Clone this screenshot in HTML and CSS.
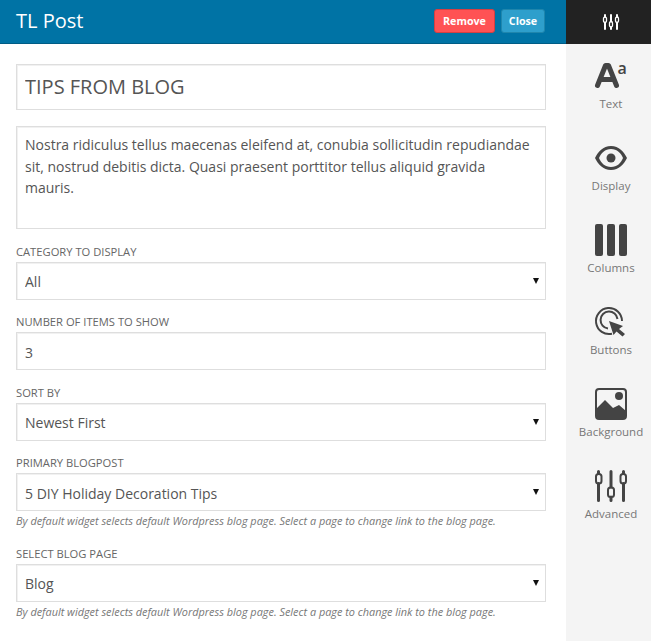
FILE: index.html
```html
<!DOCTYPE html>
<html lang="en">
<head>
    <meta charset="UTF-8">
    <meta name="viewport" content="width=device-width, initial-scale=1.0">
    <title>TL Post</title>
    <link rel="stylesheet" href="styles.css">
</head>
<body>

<div class="panel">
    <div class="main">
        <div class="header">
            <h1>TL Post</h1>
            <div class="header-buttons">
                <button class="btn btn-remove" type="button">Remove</button>
                <button class="btn btn-close" type="button">Close</button>
            </div>
        </div>

        <form class="settings">
            <input class="field field-title" type="text" value="TIPS FROM BLOG">
            <textarea class="field field-text" rows="4">Nostra ridiculus tellus maecenas eleifend at, conubia sollicitudin repudiandae sit, nostrud debitis dicta. Quasi praesent porttitor tellus aliquid gravida mauris.</textarea>

            <div class="group">
                <label for="category">Category to display</label>
                <div class="select-wrap">
                    <select class="field" id="category"><option>All</option></select>
                </div>
            </div>

            <div class="group">
                <label for="items">Number of items to show</label>
                <input class="field" type="text" id="items" value="3">
            </div>

            <div class="group">
                <label for="sort">Sort by</label>
                <div class="select-wrap">
                    <select class="field" id="sort"><option>Newest First</option></select>
                </div>
            </div>

            <div class="group">
                <label for="primary">Primary blogpost</label>
                <div class="select-wrap">
                    <select class="field" id="primary"><option>5 DIY Holiday Decoration Tips</option></select>
                </div>
                <p class="help">By default widget selects default Wordpress blog page. Select a page to change link to the blog page.</p>
            </div>

            <div class="group">
                <label for="blog-page">Select blog page</label>
                <div class="select-wrap">
                    <select class="field" id="blog-page"><option>Blog</option></select>
                </div>
                <p class="help">By default widget selects default Wordpress blog page. Select a page to change link to the blog page.</p>
            </div>
        </form>
    </div>

    <div class="sidebar">
        <a class="tab tab-top" href="#" aria-label="Settings">
            <svg width="18" height="16" viewBox="0 0 18 16">
                <g fill="none" stroke="#fff">
                    <path stroke-width="2" stroke-linecap="round" d="M3 1V3M3 8.500V15M9 1V7.500M9 13V15M15 1V3M15 8.500V15"/>
                    <rect x="1.500" y="3" width="3" height="5.500" rx="1.500" stroke-width="1.300"/>
                    <rect x="7.500" y="7.500" width="3" height="5.500" rx="1.500" stroke-width="1.300"/>
                    <rect x="13.500" y="3" width="3" height="5.500" rx="1.500" stroke-width="1.300"/>
                </g>
            </svg>
        </a>
        <a class="tab" href="#">
            <svg class="icon" width="32" height="32" viewBox="0 0 32 32">
                <path fill="none" stroke="#444" stroke-width="5" stroke-linecap="round" stroke-linejoin="round" d="M2.500 25.500 10.500 5.500h3L21.500 25.500M6.500 19.500h11"/>
                <text x="22.500" y="14" class="icon-small-a">a</text>
            </svg>
            <span>Text</span>
        </a>
        <a class="tab" href="#">
            <svg class="icon" width="32" height="32" viewBox="0 0 32 32">
                <path fill="#444" fill-rule="evenodd" d="M16 4C24 4 29 10 32 16 29 22 24 28 16 28 8 28 3 22 0 16 3 10 8 4 16 4ZM16 7C10 7 6 11 4 16 6 21 10 25 16 25 22 25 26 21 28 16 26 11 22 7 16 7Z"/>
                <circle cx="16" cy="16" r="4.500" fill="#444"/>
            </svg>
            <span>Display</span>
        </a>
        <a class="tab" href="#">
            <svg class="icon" width="32" height="32" viewBox="0 0 32 32">
                <rect x="0" y="0" width="8" height="32" rx="2" fill="#444"/>
                <rect x="12" y="0" width="8" height="32" rx="2" fill="#444"/>
                <rect x="24" y="0" width="8" height="32" rx="2" fill="#444"/>
            </svg>
            <span>Columns</span>
        </a>
        <a class="tab" href="#">
            <svg class="icon" width="32" height="32" viewBox="0 0 32 32">
                <g fill="none" stroke="#444" stroke-width="2">
                    <path d="M17 27.700A13 13 0 1 1 27 15"/>
                    <path d="M13 22.500A8.500 8.500 0 1 1 22.500 13"/>
                </g>
                <path fill="#444" d="M14 15 28 20 24 23 30 28 27.500 30.500 21.500 25.500 18.500 29Z"/>
            </svg>
            <span>Buttons</span>
        </a>
        <a class="tab" href="#">
            <svg class="icon" width="32" height="32" viewBox="0 0 32 32">
                <rect x="1" y="1" width="30" height="30" rx="3" fill="none" stroke="#444" stroke-width="2"/>
                <circle cx="24" cy="8" r="4" fill="#444"/>
                <path fill="#444" d="M1 21 10 12 18 20 24 17 31 23V29Q31 31 29 31H3Q1 31 1 29Z"/>
            </svg>
            <span>Background</span>
        </a>
        <a class="tab" href="#">
            <svg class="icon" width="32" height="32" viewBox="0 0 32 32">
                <g fill="none" stroke="#444">
                    <path stroke-width="3" stroke-linecap="round" d="M3.500 1.500V3.500M3.500 13.500V30.500M16 1.500V17M16 27V30.500M28.500 1.500V3.500M28.500 13.500V30.500"/>
                    <rect x="1" y="4" width="5.500" height="9.500" rx="2.500" stroke-width="2"/>
                    <rect x="13" y="17.500" width="6" height="9.500" rx="2.500" stroke-width="2"/>
                    <rect x="25.500" y="4" width="5.500" height="9.500" rx="2.500" stroke-width="2"/>
                </g>
            </svg>
            <span>Advanced</span>
        </a>
    </div>
</div>

</body>
</html>
```

FILE: styles.css
```css
* {
    box-sizing: border-box;
}

html, body {
    height: 100%;
}

body {
    margin: 0;
    background-color: #fff;
    font-family: "Open Sans", "Liberation Sans", sans-serif;
    color: #555;
    overflow: hidden;
}

.panel {
    display: flex;
    height: 100%;
}

.main {
    flex: 1;
    min-width: 0;
}

.header {
    display: flex;
    align-items: center;
    justify-content: space-between;
    height: 44px;
    padding: 0 21px 1px 16px;
    background-color: #0073a5;
    border-bottom: 1px solid #005c85;
}

.header h1 {
    margin: 0 0 2px;
    font-size: 20px;
    font-weight: 400;
    color: #fff;
}

.header-buttons {
    display: flex;
    gap: 6px;
}

.btn {
    height: 24px;
    padding: 0;
    border-radius: 3px;
    color: #fff;
    font-family: inherit;
    font-size: 10.700px;
    font-weight: 700;
    cursor: pointer;
}

.btn-remove {
    width: 61px;
    background-color: #ff5254;
    border: 1px solid #d63f42;
}

.btn-close {
    width: 44px;
    background-color: #2e9fcc;
    border: 1px solid #1f86ad;
}

.settings {
    display: flex;
    flex-direction: column;
    padding: 20px 20px 0 16px;
}

.field {
    display: block;
    width: 100%;
    height: 38px;
    padding: 2px 8px 0;
    background-color: #fff;
    border: 1px solid #dedede;
    border-radius: 0;
    box-shadow: inset 1px 1px 0 #f1f1f1;
    font-family: inherit;
    font-size: 14px;
    color: #555;
    appearance: none;
    outline: none;
}

.field-title {
    height: 46px;
    padding: 0 8px 1px;
    font-size: 20px;
}

.field-text {
    height: 103px;
    margin-top: 16px;
    padding: 7px 8px;
    font-size: 14px;
    line-height: 21.500px;
    resize: none;
}

.group {
    margin-top: 14.500px;
}

.group label {
    display: block;
    height: 18px;
    font-size: 11.200px;
    line-height: 16px;
    font-weight: 400;
    text-transform: uppercase;
    color: #666;
}

.select-wrap {
    position: relative;
}

.select-wrap::after {
    content: "";
    position: absolute;
    top: 16px;
    right: 7px;
    border-top: 6px solid #111;
    border-left: 3px solid transparent;
    border-right: 3px solid transparent;
    pointer-events: none;
}

.help {
    margin: 0;
    padding-top: 1px;
    height: 20px;
    font-size: 10.900px;
    line-height: 18px;
    font-style: italic;
    color: #777;
}

.sidebar {
    flex: 0 0 85px;
    background-color: #f4f4f4;
}

.tab {
    display: flex;
    flex-direction: column;
    align-items: center;
    justify-content: flex-end;
    height: 82px;
    padding-left: 5px;
    color: #777;
    font-size: 11.500px;
    line-height: 16px;
    text-decoration: none;
}

.tab span {
    margin-top: 4px;
}

.tab-top {
    justify-content: center;
    height: 44px;
    background-color: #222;
}

.tab-top + .tab {
    height: 68px;
}

.icon {
    display: block;
    overflow: visible;
}

.icon-small-a {
    font-family: "Open Sans", sans-serif;
    font-size: 16px;
    font-weight: 600;
    fill: #444;
}
```
